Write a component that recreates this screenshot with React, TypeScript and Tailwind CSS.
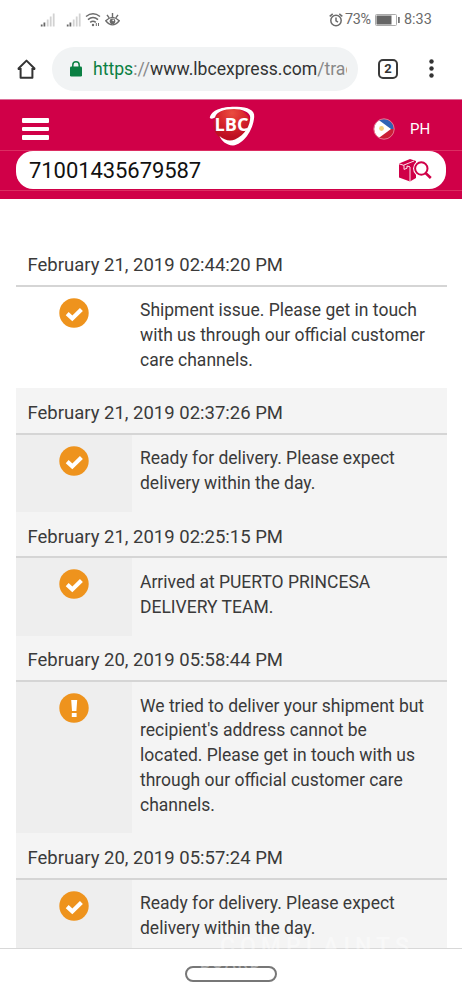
type Status = "ok" | "alert";

type TrackingEvent = {
  date: string;
  status: Status;
  lines: string[];
};

const EVENTS: TrackingEvent[] = [
  {
    date: "February 21, 2019 02:44:20 PM",
    status: "ok",
    lines: [
      "Shipment issue. Please get in touch",
      "with us through our official customer",
      "care channels.",
    ],
  },
  {
    date: "February 21, 2019 02:37:26 PM",
    status: "ok",
    lines: ["Ready for delivery. Please expect", "delivery within the day."],
  },
  {
    date: "February 21, 2019 02:25:15 PM",
    status: "ok",
    lines: ["Arrived at PUERTO PRINCESA", "DELIVERY TEAM."],
  },
  {
    date: "February 20, 2019 05:58:44 PM",
    status: "alert",
    lines: [
      "We tried to deliver your shipment but",
      "recipient's address cannot be",
      "located. Please get in touch with us",
      "through our official customer care",
      "channels.",
    ],
  },
  {
    date: "February 20, 2019 05:57:24 PM",
    status: "ok",
    lines: ["Ready for delivery. Please expect", "delivery within the day."],
  },
];

export default function App() {
  return (
    <div className="relative flex h-[1000px] w-[462px] flex-col overflow-hidden bg-white font-[Roboto,sans-serif] text-[#3a3a3a]">
      <StatusBar />
      <BrowserBar />
      <SiteHeader />
      <main className="min-h-0 flex-1 overflow-hidden pt-[41px] pr-[15px] pl-4">
        {EVENTS.map((event, i) => (
          <EventRow key={event.date} event={event} plain={i === 0} />
        ))}
      </main>
      <NavBar />
      <Watermark />
    </div>
  );
}

function StatusBar() {
  return (
    <div className="flex h-10 shrink-0 items-center pr-[30px] pl-10 text-[#6b6b6b]">
      <Signal />
      <div className="w-[11px]" />
      <Signal />
      <svg className="ml-1 h-[14px] w-4" viewBox="0 0 16 14" fill="none" stroke="currentColor" strokeWidth="1.5">
        <path d="M1 3.5Q8-1.8 15 3.5M3 6.6Q8 2.3 13 6.6M5.2 9.4Q8 7 10.8 9.4" />
        <circle cx="8" cy="12" r="1.2" fill="currentColor" stroke="none" />
        <path d="M11.3 10v3M13.5 10v3" strokeWidth="1" />
      </svg>
      <svg className="ml-1 h-[14px] w-[15px]" viewBox="0 0 15 14" fill="none" stroke="currentColor" strokeWidth="1.4">
        <path d="M.8 7.8Q7.5 1 14.2 7.8Q7.5 16 .8 7.8ZM7.5 0v4M2 1.8l2 2.9M13 1.8l-2 2.9" />
        <circle cx="7.5" cy="8.2" r="2.8" fill="currentColor" stroke="none" />
        <circle cx="8.2" cy="7.4" r=".8" fill="#fff" stroke="none" />
      </svg>
      <svg className="ml-auto h-[14px] w-[14px]" viewBox="0 0 14 14" fill="none" stroke="currentColor" strokeWidth="1.5">
        <circle cx="7" cy="7.5" r="5.2" />
        <path d="M7 4.5v3.3l2 1.3M.7 3.4L3.7.9M13.3 3.4l-3-2.5" />
      </svg>
      <span className="ml-[2px] w-[28px] text-[14.4px] tracking-[-0.4px]">73%</span>
      <svg className="ml-[2px] h-3 w-[25px]" viewBox="0 0 25 12" fill="none">
        <rect x=".5" y=".5" width="21" height="11" rx="1" stroke="#aaa" />
        <rect x="1.5" y="1.5" width="15" height="9" fill="#666" />
        <path d="M23.9 3v6" stroke="#666" strokeWidth="1.6" />
      </svg>
      <span className="ml-1 w-7 text-[14.4px] whitespace-nowrap">8:33</span>
    </div>
  );
}

function Signal() {
  return (
    <svg className="h-[14px] w-[15px]" viewBox="0 0 15 14">
      <path d="M.8 11.5h1.8v2H.8zM3.5 9.5h1.8v4H3.5z" fill="#686868" />
      <path d="M6.8 6.5h1.8v7H6.8zM9.8 3.5h1.8v10H9.8zM12.8.5h1.8v13h-1.8z" fill="#d2d2d2" />
    </svg>
  );
}

function BrowserBar() {
  return (
    <div className="flex h-[59px] shrink-0 items-center pb-0.5 pl-[17px] text-[#333]">
      <svg className="h-5 w-[19px]" viewBox="0 0 19 20" fill="none" stroke="currentColor" strokeWidth="2">
        <path d="M1 10L9.5 1.6L18 10M3.6 9v9.8h11.8V9M.8 10h2.8M18.2 10h-2.8" strokeLinejoin="round" />
      </svg>
      <div className="ml-4 flex h-11 w-[306px] items-center rounded-full bg-[#f1f3f4] pl-[18px]">
        <svg className="h-4 w-3" viewBox="0 0 12 16">
          <path d="M2.8 6V4a3.2 3.2 0 0 1 6.4 0v2" fill="none" stroke="#0b8043" strokeWidth="1.5" />
          <rect y="5.5" width="12" height="10" rx="1.3" fill="#0b8043" />
        </svg>
        <div className="ml-[11px] w-[254px] overflow-hidden pt-0.5 text-[17.6px] whitespace-nowrap">
          <span className="text-[#0b8043]">https</span>
          <span className="text-[#888]">://</span>
          www.lbcexpress.com
          <span className="text-[#888]">/trac</span>
        </div>
      </div>
      <div className="ml-5 flex size-5 items-center justify-center rounded-[5px] border-2 border-[#3a3a3a] text-[13px] font-bold">
        2
      </div>
      <svg className="ml-[31px] h-[19px] w-[5px]" viewBox="0 0 5 19" fill="currentColor">
        <circle cx="2.5" cy="2.5" r="2.2" />
        <circle cx="2.5" cy="9.5" r="2.2" />
        <circle cx="2.5" cy="16.5" r="2.2" />
      </svg>
    </div>
  );
}

function SiteHeader() {
  return (
    <header className="flex h-[100px] shrink-0 flex-col border-t border-[#dc6e98] bg-[#d00048]">
      <div className="flex h-[51px] shrink-0 items-center border-b border-[#dc2d62] pl-[22px]">
        <div className="mt-2 flex w-[27px] flex-col gap-1">
          <i className="h-[5px] rounded-[1px] bg-white" />
          <i className="h-1 rounded-[1px] bg-white" />
          <i className="h-[5px] rounded-[1px] bg-white" />
        </div>
        <Logo />
        <Flag />
        <span className="mt-2 ml-[15px] text-[15px] text-white">PH</span>
      </div>
      <div className="mr-4 ml-4 flex h-[38px] shrink-0 items-center rounded-[17px] bg-white pr-[14px] pl-[13px]">
        <span className="text-[22px] tracking-[-0.07px] text-[#111]">71001435679587</span>
        <svg className="ml-auto h-6 w-[33px]" viewBox="0 0 33 24" fill="#d00048">
          <path d="M0 5.5L11 1l6 2v17L11 23.5L0 19.5Z" />
          <path d="M0 5.8l5 1.6v4l3-1.2V8l3 .8M11 9v14.5M5 7L15 3" fill="none" stroke="#fff" strokeWidth="0.9" />
          <circle cx="22.3" cy="10.5" r="8.2" fill="#fff" />
          <circle cx="22.3" cy="10.5" r="6.2" fill="#fff" stroke="#d00048" strokeWidth="2" />
          <path d="M26.5 15l5.3 5" stroke="#d00048" strokeWidth="2.6" />
        </svg>
      </div>
      <div className="mt-px h-px bg-[#dc2d62]" />
    </header>
  );
}

function Logo() {
  return (
    <svg className="mt-1 ml-[160px] h-[42px] w-[46px]" viewBox="0 0 46 42">
      <defs>
        <radialGradient id="logo-ball" cx="50%" cy="15%" r="70%">
          <stop offset="0" stopColor="#ea4d40" />
          <stop offset="0.5" stopColor="#d8282d" />
          <stop offset="1" stopColor="#bd1022" />
        </radialGradient>
      </defs>
      <ellipse cx="23" cy="19" rx="18.5" ry="17" fill="url(#logo-ball)" />
      <path d="M.8 12C2 3 16 .3 28 .8C39 1.2 46 4 45.2 11C44 25 34 38.5 24 39.5C17 39 12.5 35 10.5 30Q18 36.5 26 33.5C36 29 41.5 19 41.2 11C41 6 33 3 25 3C14 3 7.5 6 6 11.5Q3 13.5 .8 12Z" fill="#fff" />
      <text x="5.5" y="25" fill="#fff" fontFamily="Open Sans, sans-serif" fontSize="18.5" fontWeight="700" textLength="34" lengthAdjust="spacingAndGlyphs">LBC</text>
    </svg>
  );
}

function Flag() {
  return (
    <svg className="mt-2 ml-[118px] size-[22px]" viewBox="0 0 22 22">
      <defs>
        <clipPath id="flag-clip"><circle cx="11" cy="11" r="10" /></clipPath>
      </defs>
      <g clipPath="url(#flag-clip)">
        <path d="M0 0h22v11H0z" fill="#2f62b4" />
        <path d="M0 11h22v11H0z" fill="#ca2036" />
        <path d="M3 0L18 11L3 22H0V0Z" fill="#fff" />
        <circle cx="8.5" cy="10.5" r="2.4" fill="#f2d27c" />
      </g>
      <circle cx="11" cy="11" r="10.2" fill="none" stroke="#e77b91" />
    </svg>
  );
}

function EventRow({ event, plain }: { event: TrackingEvent; plain: boolean }) {
  return (
    <section className={plain ? "bg-white" : "bg-[#f4f4f4]"}>
      <h2 className="flex h-[46.5px] items-center border-b-2 border-[#d5d5d5] pt-[7px] pl-[11.5px] text-[18.5px] whitespace-nowrap">
        {event.date}
      </h2>
      <div className="flex">
        <div className={`flex w-[116px] shrink-0 justify-center pt-[11px] ${plain ? "" : "bg-[#eeeeee]"}`}>
          <StatusIcon status={event.status} />
        </div>
        <div className="pt-[11.5px] pb-[16.1px] pl-2 text-[17.5px] leading-[24.75px] whitespace-nowrap">
          {event.lines.map((line) => (
            <div key={line}>{line}</div>
          ))}
        </div>
      </div>
    </section>
  );
}

function StatusIcon({ status }: { status: Status }) {
  return (
    <svg className="size-[30px]" viewBox="0 0 30 30">
      <circle cx="15" cy="15" r="14.7" fill="#ee931d" />
      {status === "ok" ? (
        <path d="M8.2 15.6l5.1 4.8L22.4 11.6" fill="none" stroke="#fff" strokeWidth="4.2" />
      ) : (
        <path d="M12.2 7h6l-.8 11h-4.4zM12.8 20h4.8v4h-4.8z" fill="#fff" />
      )}
    </svg>
  );
}

function NavBar() {
  return (
    <footer className="flex h-[52px] shrink-0 justify-center border-t border-[#d8d8d8] bg-white pt-[17px]">
      <div className="h-4 w-[92px] rounded-full border-2 border-[#777]" />
    </footer>
  );
}

// Faint white stamp over the bottom edge of the page
function Watermark() {
  return (
    <div className="pointer-events-none absolute top-[938px] left-[200px] font-medium whitespace-nowrap text-white/40">
      <div className="pl-5 text-[23px] leading-[18px] tracking-[5px]">COMPLAINTS</div>
      <div className="text-[16px] leading-[13px] tracking-[2px]">BOARD</div>
    </div>
  );
}
